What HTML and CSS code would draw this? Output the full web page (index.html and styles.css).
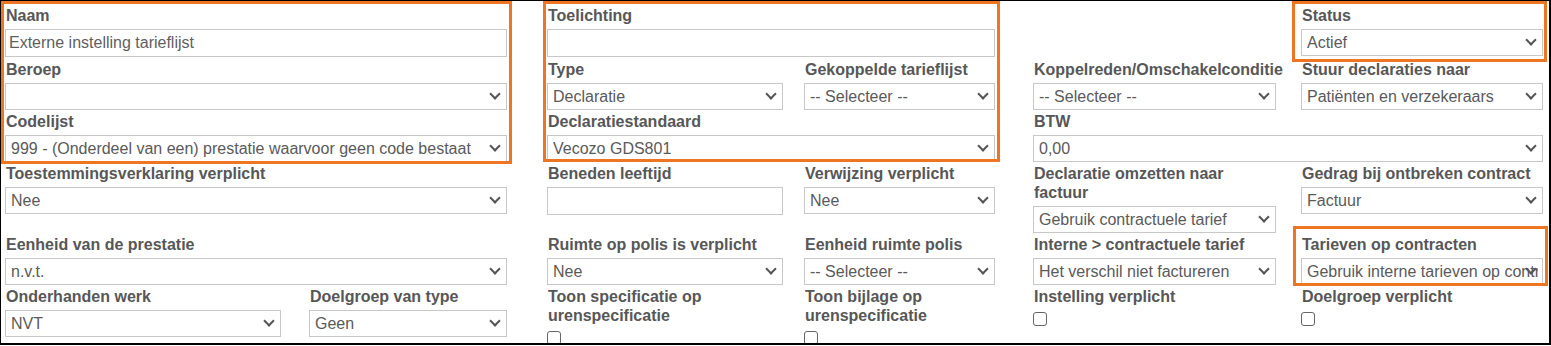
FILE: index.html
```html
<!DOCTYPE html>
<html lang="nl">
<head>
  <meta charset="UTF-8">
  <meta name="viewport" content="width=device-width, initial-scale=1.0">
  <title>Tarieflijst</title>
  <link rel="stylesheet" href="styles.css">
</head>
<body>

  <div class="sheet">
    <form class="tariff-form">

      <!-- rij 1 -->
      <div class="form-row">
        <div class="group group-a">
          <div class="field wide">
            <label>Naam</label>
            <input type="text" value="Externe instelling tarieflijst">
          </div>
        </div>
        <div class="group group-b">
          <div class="field wide">
            <label>Toelichting</label>
            <input type="text" value="">
          </div>
        </div>
        <div class="group group-c">
          <div class="field second">
            <label>Status</label>
            <div class="select"><select><option>Actief</option></select></div>
          </div>
        </div>
      </div>

      <!-- rij 2 -->
      <div class="form-row">
        <div class="group group-a">
          <div class="field wide">
            <label>Beroep</label>
            <div class="select"><select><option></option></select></div>
          </div>
        </div>
        <div class="group group-b">
          <div class="field">
            <label>Type</label>
            <div class="select"><select><option>Declaratie</option></select></div>
          </div>
          <div class="field">
            <label>Gekoppelde tarieflijst</label>
            <div class="select"><select><option>-- Selecteer --</option></select></div>
          </div>
        </div>
        <div class="group group-c">
          <div class="field">
            <label class="nowrap">Koppelreden/Omschakelconditie</label>
            <div class="select"><select><option>-- Selecteer --</option></select></div>
          </div>
          <div class="field">
            <label>Stuur declaraties naar</label>
            <div class="select"><select><option>Patiënten en verzekeraars</option></select></div>
          </div>
        </div>
      </div>

      <!-- rij 3 -->
      <div class="form-row">
        <div class="group group-a">
          <div class="field wide">
            <label>Codelijst</label>
            <div class="select"><select><option>999 - (Onderdeel van een) prestatie waarvoor geen code bestaat</option></select></div>
          </div>
        </div>
        <div class="group group-b">
          <div class="field wide">
            <label>Declaratiestandaard</label>
            <div class="select"><select><option>Vecozo GDS801</option></select></div>
          </div>
        </div>
        <div class="group group-c">
          <div class="field wide">
            <label>BTW</label>
            <div class="select"><select><option>0,00</option></select></div>
          </div>
        </div>
      </div>

      <!-- rij 4 -->
      <div class="form-row">
        <div class="group group-a">
          <div class="field wide">
            <label>Toestemmingsverklaring verplicht</label>
            <div class="select"><select><option>Nee</option></select></div>
          </div>
        </div>
        <div class="group group-b">
          <div class="field">
            <label>Beneden leeftijd</label>
            <input type="text" value="">
          </div>
          <div class="field">
            <label>Verwijzing verplicht</label>
            <div class="select"><select><option>Nee</option></select></div>
          </div>
        </div>
        <div class="group group-c">
          <div class="field">
            <label>Declaratie omzetten naar factuur</label>
            <div class="select"><select><option>Gebruik contractuele tarief</option></select></div>
          </div>
          <div class="field">
            <label>Gedrag bij ontbreken contract</label>
            <div class="select"><select><option>Factuur</option></select></div>
          </div>
        </div>
      </div>

      <!-- rij 5 -->
      <div class="form-row">
        <div class="group group-a">
          <div class="field wide">
            <label>Eenheid van de prestatie</label>
            <div class="select"><select><option>n.v.t.</option></select></div>
          </div>
        </div>
        <div class="group group-b">
          <div class="field">
            <label>Ruimte op polis is verplicht</label>
            <div class="select"><select><option>Nee</option></select></div>
          </div>
          <div class="field">
            <label>Eenheid ruimte polis</label>
            <div class="select"><select><option>-- Selecteer --</option></select></div>
          </div>
        </div>
        <div class="group group-c">
          <div class="field">
            <label>Interne &gt; contractuele tarief</label>
            <div class="select"><select><option>Het verschil niet factureren</option></select></div>
          </div>
          <div class="field">
            <label>Tarieven op contracten</label>
            <div class="select"><select><option>Gebruik interne tarieven op contracten</option></select></div>
          </div>
        </div>
      </div>

      <!-- rij 6 -->
      <div class="form-row">
        <div class="group group-a">
          <div class="field">
            <label>Onderhanden werk</label>
            <div class="select"><select><option>NVT</option></select></div>
          </div>
          <div class="field">
            <label>Doelgroep van type</label>
            <div class="select"><select><option>Geen</option></select></div>
          </div>
        </div>
        <div class="group group-b">
          <div class="field">
            <label>Toon specificatie op urenspecificatie</label>
            <input type="checkbox">
          </div>
          <div class="field">
            <label>Toon bijlage op urenspecificatie</label>
            <input type="checkbox">
          </div>
        </div>
        <div class="group group-c">
          <div class="field">
            <label>Instelling verplicht</label>
            <input type="checkbox">
          </div>
          <div class="field">
            <label>Doelgroep verplicht</label>
            <input type="checkbox">
          </div>
        </div>
      </div>

    </form>

    <!-- markeringen -->
    <div class="mark mark-naam"></div>
    <div class="mark mark-toelichting"></div>
    <div class="mark mark-status"></div>
    <div class="mark mark-tarieven"></div>
  </div>

</body>
</html>
```

FILE: styles.css
```css
body {
  margin: 0;
  background-color: #fff;
  font-family: 'Liberation Sans', Arial, sans-serif;
}

.sheet {
  position: relative;
  box-sizing: border-box;
  width: 1551px;
  height: 345px;
  border: 1px solid #000;
  border-right-width: 2px;
  border-bottom-width: 2px;
  overflow: hidden;
}

.tariff-form {
  padding: 5px 0 0 4px;
}

.form-row {
  display: flex;
  align-items: flex-start;
}

.form-row:first-child {
  margin-bottom: 1px;
}

.group {
  display: grid;
  align-items: start;
}

.group-a {
  width: 502px;
  grid-template-columns: 276px 198px;
  column-gap: 28px;
  margin-right: 40px;
}

.group-b {
  width: 448px;
  grid-template-columns: 236px 191px;
  column-gap: 21px;
  margin-right: 38px;
}

.group-c {
  width: 510px;
  grid-template-columns: 243px 242px;
  column-gap: 25px;
}

.field {
  margin-bottom: 2px;
  min-width: 0;
}

.field.wide {
  grid-column: 1 / -1;
}

.field.second {
  grid-column: 2;
}

.field label {
  display: block;
  font-size: 16px;
  line-height: 19px;
  font-weight: bold;
  color: #575757;
  margin: 0 0 4px 1px;
}

.nowrap {
  white-space: nowrap;
}

.field input[type="text"] {
  display: block;
  box-sizing: border-box;
  width: 100%;
  height: 28px;
  margin: 0;
  padding: 0 3px;
  border: 1px solid #c8c8c8;
  border-radius: 0;
  font-family: inherit;
  font-size: 16px;
  color: #5f5f5f;
  background-color: #fff;
}

.select {
  position: relative;
}

.select select {
  display: block;
  box-sizing: border-box;
  width: 100%;
  height: 27px;
  margin: 0;
  padding: 0 4px 0 5px;
  border: 1px solid #c8c8c8;
  border-radius: 0;
  font-family: inherit;
  font-size: 16px;
  color: #5a5a5a;
  background-color: #fff;
  appearance: none;
  -webkit-appearance: none;
}

/* pijltje van de keuzelijst */
.select::after {
  content: "";
  position: absolute;
  right: 8px;
  top: 50%;
  width: 6px;
  height: 6px;
  margin-top: -7px;
  border-right: 2px solid #555;
  border-bottom: 2px solid #555;
  transform: rotate(45deg);
  pointer-events: none;
}

.field input[type="checkbox"] {
  display: block;
  box-sizing: border-box;
  width: 14px;
  height: 14px;
  margin: 6px 0 0 0;
  border: 1px solid #666;
  border-radius: 3px;
  background-color: #fff;
  appearance: none;
  -webkit-appearance: none;
}

/* oranje markeringen over het formulier */
.mark {
  position: absolute;
  box-sizing: border-box;
  border: 3px solid #ee7623;
  pointer-events: none;
}

.mark-naam {
  left: 0;
  top: 0;
  width: 511px;
  height: 163px;
}

.mark-toelichting {
  left: 542px;
  top: 0;
  width: 457px;
  height: 161px;
}

.mark-status {
  left: 1291px;
  top: 0;
  width: 255px;
  height: 61px;
}

.mark-tarieven {
  left: 1292px;
  top: 225px;
  width: 255px;
  height: 60px;
}
```
